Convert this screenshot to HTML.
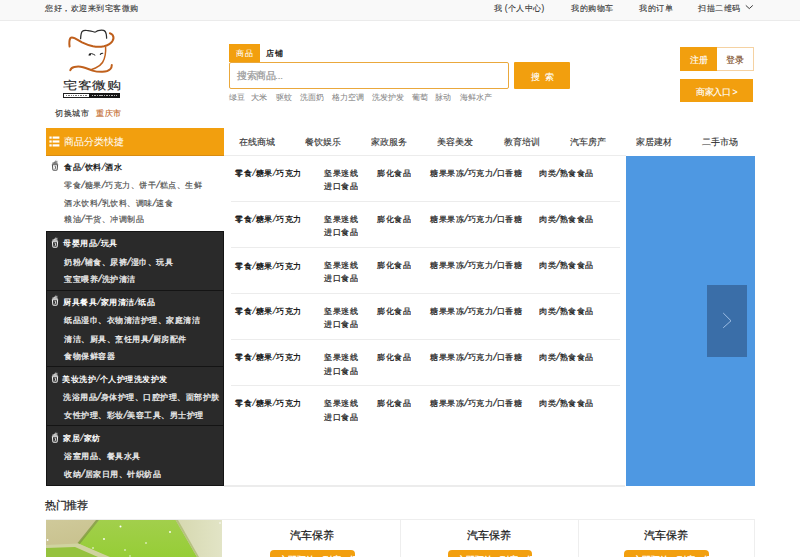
<!DOCTYPE html>
<html><head><meta charset="utf-8">
<style>
*{margin:0;padding:0;box-sizing:border-box}
html,body{width:800px;height:557px;overflow:hidden;background:#fff}
body{font-family:"Liberation Sans",sans-serif;color:#333;position:relative}
.a{position:absolute}
.t{position:absolute;white-space:nowrap;line-height:24px;transform:scale(.5);transform-origin:0 0;-webkit-text-stroke:0.45px currentColor}
.org{background:#f29f0e}
.sl{font-size:1.25em;line-height:0;margin:0 0.035em;font-weight:normal;display:inline-block;transform:skewX(-14deg)}
</style></head><body>
<div class="a" style="left:0;top:0;width:800px;height:20.5px;background:#f9f9f9;border-bottom:1px solid #ebebeb"></div>
<svg class="a" style="left:743px;top:4px" width="10" height="10" viewBox="743 4 10 10"><path d="M745.8 5.4 L749.3 8.6 L752.8 5.4" fill="none" stroke="#333" stroke-width="0.95"/></svg>
<svg class="a" style="left:60px;top:26px" width="64" height="74" viewBox="60 26 64 74">
<path d="M80.6 38.7 C80.8 35 81 32.5 82.4 31.3 C83.5 30.3 85 30.2 87 30.5 C89.5 30.9 91.5 31.2 92.6 31.5 C93.6 31.8 94.2 32.1 94.9 32.1 C95.8 32 96.8 31 98.2 30.6 C100 30.2 102 30.1 103.6 30.4 C105.3 30.9 106 32.5 106.3 34.5 C106.5 36 106.6 37.2 106.6 38.2" fill="none" stroke="#2e2e2e" stroke-width="1.25" stroke-linecap="round"/>
<path d="M69.6 46.5 C69.2 43.5 69.3 39.8 70.4 38.1 C71.2 37.1 72.6 37.2 74.5 38.2 C77 39.6 79.5 41 82 42.3 C86 44.2 90 45.6 93 46.3 C96.5 47 100.5 47 104 46.3 C107.5 45.5 110.5 43.8 112.3 41.3 C113.6 39.4 113.8 37 112.8 35.3 C112.1 34.2 111 33.5 109.9 33.2" fill="none" stroke="#bf5f1c" stroke-width="2.0" stroke-linecap="round"/>
<path d="M105.6 47.4 C105.8 50 105.6 52.5 105.2 55 C104.8 57.5 104 60.2 102.5 62.5 C100.8 65 98.5 66.8 95.5 68 C94 68.6 92.5 69.2 91 69.8" fill="none" stroke="#c0611d" stroke-width="1.5" stroke-linecap="round"/>
<path d="M70.3 70.2 C70.8 68.6 72.3 67.4 74.3 67 C77 66.4 80 66.4 83 67.2 C86.5 68.1 89.5 69.6 92.5 70.6 C95.5 71.5 99 71.9 102.5 71.8 C105.8 71.7 108.5 70.9 110.3 69.1 C111.4 68 111.8 66.5 111.8 65" fill="none" stroke="#c0611d" stroke-width="2.0" stroke-linecap="round"/>
<path d="M89 55 C89.4 53.9 90.4 53.4 91.5 53.6 C92.8 53.9 93.9 54.5 94.9 55.1" fill="none" stroke="#222" stroke-width="1.0" stroke-linecap="round"/>
<circle cx="89.9" cy="54.6" r="1.15" fill="#1a1a1a"/>
<path d="M100.3 54.4 C100.8 53.6 101.8 53.2 102.7 53.2" fill="none" stroke="#222" stroke-width="1.1" stroke-linecap="round"/>
</svg>
<div class="a" style="left:63.2px;top:93px;width:56.5px;height:5.1px;border:0.8px solid #222;background:#fff"></div><div class="a" style="left:66px;top:94.7px;width:20.5px;height:1.8px;background:repeating-linear-gradient(90deg,#555 0 1px,transparent 1px 1.7px);opacity:.8"></div>
<div class="a" style="left:89.2px;top:93px;width:30.5px;height:5.1px;background:#161616"></div><div class="a" style="left:92px;top:94.7px;width:25px;height:1.8px;background:repeating-linear-gradient(90deg,#ddd 0 1px,transparent 1px 1.7px);opacity:.8"></div>
<div class="a org" style="left:229px;top:44px;width:30.6px;height:18px"></div>
<div class="a" style="left:229px;top:61.5px;width:280px;height:27px;border:1.5px solid #eaa83c;border-radius:2px;background:#fff"></div>
<div class="a org" style="left:514px;top:61.5px;width:56px;height:27.2px;border-radius:1px"></div>
<div class="a org" style="left:680px;top:47px;width:37.1px;height:24px"></div>
<div class="a" style="left:717px;top:47px;width:37px;height:24px;border:1px solid #f5d2a2;border-left:none;background:#fff"></div>
<div class="a org" style="left:680px;top:79.2px;width:73px;height:23px"></div>
<div class="a org" style="left:45.5px;top:127.6px;width:178.5px;height:28px;border-bottom:1px solid #d88c12"></div>
<svg class="a" style="left:48px;top:135px" width="13" height="13" viewBox="48 135 13 13"><g fill="#fff"><rect x="49.4" y="136.5" width="2.3" height="2.2"/><rect x="52.6" y="136.5" width="6.8" height="2.2"/><rect x="49.4" y="140.4" width="2.3" height="2.2"/><rect x="52.6" y="140.4" width="6.8" height="2.2"/><rect x="49.4" y="144.3" width="2.3" height="2.2"/><rect x="52.6" y="144.3" width="6.8" height="2.2"/></g></svg>
<div class="a" style="left:224px;top:154.6px;width:402px;height:1.3px;background:#ececec"></div>
<div class="a" style="left:45.5px;top:231px;width:178.5px;height:255px;background:#2a2a2a;border:1px solid #141414"></div>
<div class="a" style="left:45.5px;top:289.9px;width:178.5px;height:1px;background:#141414"></div>
<div class="a" style="left:45.5px;top:366.0px;width:178.5px;height:1px;background:#141414"></div>
<div class="a" style="left:45.5px;top:424.8px;width:178.5px;height:1px;background:#141414"></div>
<svg class="a" style="left:50px;top:159.3px" width="10" height="14" viewBox="0 0 10 14"><path d="M2.4 3.6 Q5 2.6 7.6 3.6 L7.7 5.3 L2.3 5.3 Z" fill="#555" opacity="0.75"/><path d="M4.2 3.4 L6.2 1.6 M6 3.4 L7.4 1.9" stroke="#555" stroke-width="0.9"/><path d="M2.4 5.8 L7.6 5.8 L7.2 10.3 Q7 11.3 6 11.3 L4 11.3 Q3 11.3 2.8 10.3 Z" fill="none" stroke="#555" stroke-width="1.05"/><path d="M4.6 7.3 L5.6 7.3 L5.4 9.6 Q5.2 10.2 4.5 10" stroke="#555" stroke-width="0.85" fill="none"/></svg>
<svg class="a" style="left:50px;top:235.7px" width="10" height="14" viewBox="0 0 10 14"><path d="M2.4 3.6 Q5 2.6 7.6 3.6 L7.7 5.3 L2.3 5.3 Z" fill="#eee" opacity="0.75"/><path d="M4.2 3.4 L6.2 1.6 M6 3.4 L7.4 1.9" stroke="#eee" stroke-width="0.9"/><path d="M2.4 5.8 L7.6 5.8 L7.2 10.3 Q7 11.3 6 11.3 L4 11.3 Q3 11.3 2.8 10.3 Z" fill="none" stroke="#eee" stroke-width="1.05"/><path d="M4.6 7.3 L5.6 7.3 L5.4 9.6 Q5.2 10.2 4.5 10" stroke="#eee" stroke-width="0.85" fill="none"/></svg>
<svg class="a" style="left:50px;top:294.1px" width="10" height="14" viewBox="0 0 10 14"><path d="M2.4 3.6 Q5 2.6 7.6 3.6 L7.7 5.3 L2.3 5.3 Z" fill="#eee" opacity="0.75"/><path d="M4.2 3.4 L6.2 1.6 M6 3.4 L7.4 1.9" stroke="#eee" stroke-width="0.9"/><path d="M2.4 5.8 L7.6 5.8 L7.2 10.3 Q7 11.3 6 11.3 L4 11.3 Q3 11.3 2.8 10.3 Z" fill="none" stroke="#eee" stroke-width="1.05"/><path d="M4.6 7.3 L5.6 7.3 L5.4 9.6 Q5.2 10.2 4.5 10" stroke="#eee" stroke-width="0.85" fill="none"/></svg>
<svg class="a" style="left:50px;top:371.4px" width="10" height="14" viewBox="0 0 10 14"><path d="M2.4 3.6 Q5 2.6 7.6 3.6 L7.7 5.3 L2.3 5.3 Z" fill="#eee" opacity="0.75"/><path d="M4.2 3.4 L6.2 1.6 M6 3.4 L7.4 1.9" stroke="#eee" stroke-width="0.9"/><path d="M2.4 5.8 L7.6 5.8 L7.2 10.3 Q7 11.3 6 11.3 L4 11.3 Q3 11.3 2.8 10.3 Z" fill="none" stroke="#eee" stroke-width="1.05"/><path d="M4.6 7.3 L5.6 7.3 L5.4 9.6 Q5.2 10.2 4.5 10" stroke="#eee" stroke-width="0.85" fill="none"/></svg>
<svg class="a" style="left:50px;top:430.5px" width="10" height="14" viewBox="0 0 10 14"><path d="M2.4 3.6 Q5 2.6 7.6 3.6 L7.7 5.3 L2.3 5.3 Z" fill="#eee" opacity="0.75"/><path d="M4.2 3.4 L6.2 1.6 M6 3.4 L7.4 1.9" stroke="#eee" stroke-width="0.9"/><path d="M2.4 5.8 L7.6 5.8 L7.2 10.3 Q7 11.3 6 11.3 L4 11.3 Q3 11.3 2.8 10.3 Z" fill="none" stroke="#eee" stroke-width="1.05"/><path d="M4.6 7.3 L5.6 7.3 L5.4 9.6 Q5.2 10.2 4.5 10" stroke="#eee" stroke-width="0.85" fill="none"/></svg>
<div class="a" style="left:230.5px;top:200.55px;width:389.5px;height:1.4px;background:#ececec"></div>
<div class="a" style="left:230.5px;top:246.65px;width:389.5px;height:1.4px;background:#ececec"></div>
<div class="a" style="left:230.5px;top:292.75px;width:389.5px;height:1.4px;background:#ececec"></div>
<div class="a" style="left:230.5px;top:338.85px;width:389.5px;height:1.4px;background:#ececec"></div>
<div class="a" style="left:230.5px;top:384.95px;width:389.5px;height:1.4px;background:#ececec"></div>
<div class="a" style="left:626px;top:155.6px;width:128.5px;height:330.3px;background:#4e98e2"></div>
<div class="a" style="left:707px;top:285.4px;width:40.4px;height:71.6px;background:#3a6ea8"></div>
<svg class="a" style="left:718px;top:308px" width="18" height="24" viewBox="718 308 18 24"><path d="M723.2 313 L731 320.8 L723.2 327.8" fill="none" stroke="#a9c6ea" stroke-width="0.9"/></svg>
<div class="a" style="left:224px;top:485.2px;width:400.5px;height:1.6px;background:#ececec"></div>
<div class="a" style="left:45.5px;top:519px;width:709px;height:1px;background:#eee"></div>
<div class="a" style="left:400px;top:519px;width:1px;height:38px;background:#eee"></div>
<div class="a" style="left:577.5px;top:519px;width:1px;height:38px;background:#eee"></div>
<div class="a" style="left:753.5px;top:519px;width:1px;height:38px;background:#eee"></div>
<div class="a org" style="left:270px;top:550.2px;width:85.0px;height:16px;border-radius:4px"></div>
<div class="a org" style="left:447.5px;top:550.2px;width:84.5px;height:16px;border-radius:4px"></div>
<div class="a org" style="left:624px;top:550.2px;width:84.6px;height:16px;border-radius:4px"></div>
<svg class="a" style="left:46px;top:520px" width="176" height="37" viewBox="46 520 176 37">
<defs>
<linearGradient id="kh" x1="0" y1="0" x2="1" y2="1"><stop offset="0" stop-color="#cfc99a"/><stop offset="0.6" stop-color="#c6bf8a"/><stop offset="1" stop-color="#d3cfa6"/></linearGradient>
<linearGradient id="rt" x1="0" y1="0" x2="1" y2="0"><stop offset="0" stop-color="#cfd1a2"/><stop offset="1" stop-color="#e2e4c6"/></linearGradient>
<linearGradient id="gg" x1="0" y1="0" x2="0" y2="1"><stop offset="0" stop-color="#a2cf4c"/><stop offset="1" stop-color="#96cd36"/></linearGradient>
</defs>
<rect x="46" y="520" width="176" height="37" fill="url(#kh)"/>
<rect x="150" y="520" width="72" height="37" fill="url(#rt)"/>
<path d="M99 520 L175.6 520 L197 557 L108 557 L78.3 543.6 Z" fill="url(#gg)"/>
<path d="M99 520 L96 520 L77.5 543 L79.5 544.5 Z" fill="#7f9c3e" opacity="0.8"/>
<path d="M175.6 520 L178 520 L199 557 L197 557 Z" fill="#b3bf7a" opacity="0.9"/>
<path d="M46 545 L78.3 543.6 L110 557 L46 557 Z" fill="#d0d3a0"/>
<path d="M46 548 L75 547 L98 557 L46 557 Z" fill="#95c23e"/>
<g fill="#fff"><circle cx="120.5" cy="526.4" r="1"/><circle cx="104" cy="539" r="0.9"/><circle cx="93" cy="548" r="0.8"/><circle cx="170" cy="532" r="0.9"/><circle cx="146" cy="543" r="0.8"/><circle cx="125" cy="550" r="0.8"/><circle cx="47.6" cy="540" r="0.9"/><circle cx="130" cy="556" r="0.7"/><circle cx="220" cy="523" r="0.8"/></g>
</svg>
<div class="a btntxt" style="left:279.0px;top:553.6px;width:67.0px;text-align:center;font-size:9px;line-height:12px;color:#fff;white-space:nowrap;-webkit-text-stroke:0.3px #fff">立即预约 · 到店 · 领取</div>
<div class="a btntxt" style="left:456.5px;top:553.6px;width:66.5px;text-align:center;font-size:9px;line-height:12px;color:#fff;white-space:nowrap;-webkit-text-stroke:0.3px #fff">立即预约 · 到店 · 领取</div>
<div class="a btntxt" style="left:633.0px;top:553.6px;width:66.6px;text-align:center;font-size:9px;line-height:12px;color:#fff;white-space:nowrap;-webkit-text-stroke:0.3px #fff">立即预约 · 到店 · 领取</div>
<div class="t" id="g1" style="left:45.31px;top:1.75px;font-size:16.50px;font-weight:normal;-webkit-text-stroke:0.2px currentColor;color:#333;">您好，欢迎来到宅客微购</div>
<div class="t" id="g2" style="left:493.80px;top:1.75px;font-size:16.50px;font-weight:normal;-webkit-text-stroke:0.2px currentColor;color:#333;">我 (个人中心)</div>
<div class="t" id="g3" style="left:570.90px;top:1.75px;font-size:16.50px;font-weight:normal;-webkit-text-stroke:0.2px currentColor;color:#333;">我的购物车</div>
<div class="t" id="g4" style="left:638.70px;top:1.75px;font-size:16.50px;font-weight:normal;-webkit-text-stroke:0.2px currentColor;color:#333;">我的订单</div>
<div class="t" id="g5" style="left:698.40px;top:1.75px;font-size:16.50px;font-weight:normal;-webkit-text-stroke:0.2px currentColor;color:#333;">扫描二维码</div>
<div class="t" id="lg" style="left:63.40px;top:80.10px;font-size:28.60px;font-weight:normal;color:#1e1e1e;transform:scale(.5,0.39);-webkit-text-stroke:0.3px currentColor;">宅客微购</div>
<div class="t" id="c1" style="left:54.76px;top:106.50px;font-size:16.80px;font-weight:normal;-webkit-text-stroke:0.3px currentColor;color:#333;">切换城市</div>
<div class="t" id="c2" style="left:95.70px;top:106.50px;font-size:16.80px;font-weight:normal;-webkit-text-stroke:0.3px currentColor;color:#c46a2c;">重庆市</div>
<div class="t" id="s1" style="left:235.50px;top:46.60px;font-size:16.60px;font-weight:normal;-webkit-text-stroke:0.1px currentColor;color:#fff;">商品</div>
<div class="t" id="s2" style="left:266.20px;top:46.60px;font-size:16.60px;font-weight:bold;-webkit-text-stroke:0px currentColor;color:#222;">店铺</div>
<div class="t" id="ph" style="left:236.80px;top:70.30px;font-size:19.00px;font-weight:normal;color:#999;">搜索商品...</div>
<div class="t" id="sb" style="left:531.03px;top:71.00px;font-size:17.20px;font-weight:normal;-webkit-text-stroke:0.25px currentColor;color:#fff;letter-spacing:2.8px;">搜 索</div>
<div class="t" id="h0" style="left:229.10px;top:90.90px;font-size:16.30px;font-weight:normal;-webkit-text-stroke:0.1px currentColor;color:#858585;">绿豆</div>
<div class="t" id="h1" style="left:250.80px;top:90.90px;font-size:16.30px;font-weight:normal;-webkit-text-stroke:0.1px currentColor;color:#858585;">大米</div>
<div class="t" id="h2" style="left:276.30px;top:90.90px;font-size:16.30px;font-weight:normal;-webkit-text-stroke:0.1px currentColor;color:#858585;">驱蚊</div>
<div class="t" id="h3" style="left:300.00px;top:90.90px;font-size:16.30px;font-weight:normal;-webkit-text-stroke:0.1px currentColor;color:#858585;">洗面奶</div>
<div class="t" id="h4" style="left:332.00px;top:90.90px;font-size:16.30px;font-weight:normal;-webkit-text-stroke:0.1px currentColor;color:#858585;">格力空调</div>
<div class="t" id="h5" style="left:371.50px;top:90.90px;font-size:16.30px;font-weight:normal;-webkit-text-stroke:0.1px currentColor;color:#858585;">洗发护发</div>
<div class="t" id="h6" style="left:412.00px;top:90.90px;font-size:16.30px;font-weight:normal;-webkit-text-stroke:0.1px currentColor;color:#858585;">葡萄</div>
<div class="t" id="h7" style="left:435.25px;top:90.90px;font-size:16.30px;font-weight:normal;-webkit-text-stroke:0.1px currentColor;color:#858585;">脉动</div>
<div class="t" id="h8" style="left:459.50px;top:90.90px;font-size:16.30px;font-weight:normal;-webkit-text-stroke:0.1px currentColor;color:#858585;">海鲜水产</div>
<div class="t" id="r1" style="left:689.50px;top:53.80px;font-size:17.40px;font-weight:normal;-webkit-text-stroke:0.25px currentColor;color:#fff;">注册</div>
<div class="t" id="r2" style="left:726.00px;top:53.80px;font-size:17.40px;font-weight:normal;-webkit-text-stroke:0.25px currentColor;color:#7b4a1e;">登录</div>
<div class="t" id="r3" style="left:696.00px;top:86.20px;font-size:17.40px;font-weight:normal;-webkit-text-stroke:0.25px currentColor;color:#fff;">商家入口 &gt;</div>
<div class="t" id="ch" style="left:64.00px;top:135.00px;font-size:19.70px;font-weight:normal;-webkit-text-stroke:0.1px currentColor;color:#fff;">商品分类快捷</div>
<div class="t" id="n0" style="left:238.70px;top:136.25px;font-size:18.20px;font-weight:normal;-webkit-text-stroke:0.25px currentColor;color:#333;">在线商城</div>
<div class="t" id="n1" style="left:305.18px;top:136.25px;font-size:18.20px;font-weight:normal;-webkit-text-stroke:0.25px currentColor;color:#333;">餐饮娱乐</div>
<div class="t" id="n2" style="left:371.16px;top:136.25px;font-size:18.20px;font-weight:normal;-webkit-text-stroke:0.25px currentColor;color:#333;">家政服务</div>
<div class="t" id="n3" style="left:436.64px;top:136.25px;font-size:18.20px;font-weight:normal;-webkit-text-stroke:0.25px currentColor;color:#333;">美容美发</div>
<div class="t" id="n4" style="left:503.62px;top:136.25px;font-size:18.20px;font-weight:normal;-webkit-text-stroke:0.25px currentColor;color:#333;">教育培训</div>
<div class="t" id="n5" style="left:570.10px;top:136.25px;font-size:18.20px;font-weight:normal;-webkit-text-stroke:0.25px currentColor;color:#333;">汽车房产</div>
<div class="t" id="n6" style="left:635.58px;top:136.25px;font-size:18.20px;font-weight:normal;-webkit-text-stroke:0.25px currentColor;color:#333;">家居建材</div>
<div class="t" id="n7" style="left:702.06px;top:136.25px;font-size:18.20px;font-weight:normal;-webkit-text-stroke:0.25px currentColor;color:#333;">二手市场</div>
<div class="t" id="ct0" style="left:63.70px;top:161.20px;font-size:16.70px;font-weight:bold;-webkit-text-stroke:0px currentColor;color:#222;">食品<span class="sl">/</span>饮料<span class="sl">/</span>酒水</div>
<div class="t" id="cs0_0" style="left:64.20px;top:179.00px;font-size:16.60px;font-weight:normal;-webkit-text-stroke:0.3px currentColor;color:#4a4a4a;">零食<span class="sl">/</span>糖果<span class="sl">/</span>巧克力、饼干<span class="sl">/</span>糕点、生鲜</div>
<div class="t" id="cs0_1" style="left:63.50px;top:197.20px;font-size:16.60px;font-weight:normal;-webkit-text-stroke:0.3px currentColor;color:#4a4a4a;">酒水饮料<span class="sl">/</span>乳饮料、调味<span class="sl">/</span>速食</div>
<div class="t" id="cs0_2" style="left:63.50px;top:212.80px;font-size:16.60px;font-weight:normal;-webkit-text-stroke:0.3px currentColor;color:#4a4a4a;">粮油<span class="sl">/</span>干货、冲调制品</div>
<div class="t" id="ct1" style="left:62.69px;top:237.19px;font-size:16.70px;font-weight:bold;-webkit-text-stroke:0px currentColor;color:#fff;">母婴用品<span class="sl">/</span>玩具</div>
<div class="t" id="cs1_0" style="left:63.50px;top:255.50px;font-size:16.60px;font-weight:normal;-webkit-text-stroke:0.6px currentColor;color:#ececec;">奶粉<span class="sl">/</span>辅食、尿裤<span class="sl">/</span>湿巾、玩具</div>
<div class="t" id="cs1_1" style="left:63.50px;top:272.90px;font-size:16.60px;font-weight:normal;-webkit-text-stroke:0.6px currentColor;color:#ececec;">宝宝喂养<span class="sl">/</span>洗护清洁</div>
<div class="t" id="ct2" style="left:63.20px;top:295.90px;font-size:16.70px;font-weight:bold;-webkit-text-stroke:0px currentColor;color:#fff;">厨具餐具<span class="sl">/</span>家用清洁<span class="sl">/</span>纸品</div>
<div class="t" id="cs2_0" style="left:63.50px;top:313.50px;font-size:16.60px;font-weight:normal;-webkit-text-stroke:0.6px currentColor;color:#ececec;">纸品湿巾、衣物清洁护理、家庭清洁</div>
<div class="t" id="cs2_1" style="left:63.50px;top:332.50px;font-size:16.60px;font-weight:normal;-webkit-text-stroke:0.6px currentColor;color:#ececec;">清洁、厨具、烹饪用具<span class="sl">/</span>厨房配件</div>
<div class="t" id="cs2_2" style="left:63.50px;top:349.70px;font-size:16.60px;font-weight:normal;-webkit-text-stroke:0.6px currentColor;color:#ececec;">食物保鲜容器</div>
<div class="t" id="ct3" style="left:61.70px;top:372.70px;font-size:16.70px;font-weight:bold;-webkit-text-stroke:0px currentColor;color:#fff;">美妆洗护<span class="sl">/</span>个人护理洗发护发</div>
<div class="t" id="cs3_0" style="left:62.50px;top:391.30px;font-size:16.60px;font-weight:normal;-webkit-text-stroke:0.6px currentColor;color:#ececec;">洗浴用品<span class="sl">/</span>身体护理、口腔护理、面部护肤</div>
<div class="t" id="cs3_1" style="left:63.50px;top:409.00px;font-size:16.60px;font-weight:normal;-webkit-text-stroke:0.6px currentColor;color:#ececec;">女性护理、彩妆<span class="sl">/</span>美容工具、男士护理</div>
<div class="t" id="ct4" style="left:62.90px;top:431.70px;font-size:16.70px;font-weight:bold;-webkit-text-stroke:0px currentColor;color:#fff;">家居<span class="sl">/</span>家纺</div>
<div class="t" id="cs4_0" style="left:63.50px;top:449.50px;font-size:16.60px;font-weight:normal;-webkit-text-stroke:0.6px currentColor;color:#ececec;">浴室用品、餐具水具</div>
<div class="t" id="cs4_1" style="left:63.50px;top:467.80px;font-size:16.60px;font-weight:normal;-webkit-text-stroke:0.6px currentColor;color:#ececec;">收纳<span class="sl">/</span>居家日用、针织纺品</div>
<div class="t" id="rb0" style="left:234.75px;top:166.75px;font-size:16.80px;font-weight:bold;-webkit-text-stroke:0px currentColor;color:#1a1a1a;">零食<span class="sl">/</span>糖果<span class="sl">/</span>巧克力</div>
<div class="t" id="ra0" style="left:324.00px;top:166.50px;font-size:16.60px;font-weight:normal;color:#1e1e1e;">坚果迷线</div>
<div class="t" id="rc0" style="left:376.50px;top:166.50px;font-size:16.60px;font-weight:normal;color:#1e1e1e;">膨化食品</div>
<div class="t" id="rd0" style="left:430.40px;top:166.50px;font-size:16.60px;font-weight:normal;color:#1e1e1e;">糖果果冻<span class="sl">/</span>巧克力<span class="sl">/</span>口香糖</div>
<div class="t" id="re0" style="left:539.30px;top:166.50px;font-size:16.60px;font-weight:normal;color:#1e1e1e;">肉类<span class="sl">/</span>熟食食品</div>
<div class="t" id="rf0" style="left:324.00px;top:180.00px;font-size:16.60px;font-weight:normal;color:#1e1e1e;">进口食品</div>
<div class="t" id="rb1" style="left:234.75px;top:212.65px;font-size:16.80px;font-weight:bold;-webkit-text-stroke:0px currentColor;color:#1a1a1a;">零食<span class="sl">/</span>糖果<span class="sl">/</span>巧克力</div>
<div class="t" id="ra1" style="left:324.00px;top:212.90px;font-size:16.60px;font-weight:normal;color:#1e1e1e;">坚果迷线</div>
<div class="t" id="rc1" style="left:376.50px;top:212.90px;font-size:16.60px;font-weight:normal;color:#1e1e1e;">膨化食品</div>
<div class="t" id="rd1" style="left:430.40px;top:212.90px;font-size:16.60px;font-weight:normal;color:#1e1e1e;">糖果果冻<span class="sl">/</span>巧克力<span class="sl">/</span>口香糖</div>
<div class="t" id="re1" style="left:539.30px;top:212.90px;font-size:16.60px;font-weight:normal;color:#1e1e1e;">肉类<span class="sl">/</span>熟食食品</div>
<div class="t" id="rf1" style="left:324.00px;top:225.90px;font-size:16.60px;font-weight:normal;color:#1e1e1e;">进口食品</div>
<div class="t" id="rb2" style="left:234.75px;top:259.55px;font-size:16.80px;font-weight:bold;-webkit-text-stroke:0px currentColor;color:#1a1a1a;">零食<span class="sl">/</span>糖果<span class="sl">/</span>巧克力</div>
<div class="t" id="ra2" style="left:324.00px;top:258.80px;font-size:16.60px;font-weight:normal;color:#1e1e1e;">坚果迷线</div>
<div class="t" id="rc2" style="left:376.50px;top:258.80px;font-size:16.60px;font-weight:normal;color:#1e1e1e;">膨化食品</div>
<div class="t" id="rd2" style="left:430.40px;top:258.80px;font-size:16.60px;font-weight:normal;color:#1e1e1e;">糖果果冻<span class="sl">/</span>巧克力<span class="sl">/</span>口香糖</div>
<div class="t" id="re2" style="left:539.30px;top:258.80px;font-size:16.60px;font-weight:normal;color:#1e1e1e;">肉类<span class="sl">/</span>熟食食品</div>
<div class="t" id="rf2" style="left:324.00px;top:271.80px;font-size:16.60px;font-weight:normal;color:#1e1e1e;">进口食品</div>
<div class="t" id="rb3" style="left:234.75px;top:305.45px;font-size:16.80px;font-weight:bold;-webkit-text-stroke:0px currentColor;color:#1a1a1a;">零食<span class="sl">/</span>糖果<span class="sl">/</span>巧克力</div>
<div class="t" id="ra3" style="left:324.00px;top:305.20px;font-size:16.60px;font-weight:normal;color:#1e1e1e;">坚果迷线</div>
<div class="t" id="rc3" style="left:376.50px;top:305.20px;font-size:16.60px;font-weight:normal;color:#1e1e1e;">膨化食品</div>
<div class="t" id="rd3" style="left:430.40px;top:305.20px;font-size:16.60px;font-weight:normal;color:#1e1e1e;">糖果果冻<span class="sl">/</span>巧克力<span class="sl">/</span>口香糖</div>
<div class="t" id="re3" style="left:539.30px;top:305.20px;font-size:16.60px;font-weight:normal;color:#1e1e1e;">肉类<span class="sl">/</span>熟食食品</div>
<div class="t" id="rf3" style="left:324.00px;top:317.70px;font-size:16.60px;font-weight:normal;color:#1e1e1e;">进口食品</div>
<div class="t" id="rb4" style="left:234.75px;top:351.35px;font-size:16.80px;font-weight:bold;-webkit-text-stroke:0px currentColor;color:#1a1a1a;">零食<span class="sl">/</span>糖果<span class="sl">/</span>巧克力</div>
<div class="t" id="ra4" style="left:324.00px;top:351.10px;font-size:16.60px;font-weight:normal;color:#1e1e1e;">坚果迷线</div>
<div class="t" id="rc4" style="left:376.50px;top:351.10px;font-size:16.60px;font-weight:normal;color:#1e1e1e;">膨化食品</div>
<div class="t" id="rd4" style="left:430.40px;top:351.10px;font-size:16.60px;font-weight:normal;color:#1e1e1e;">糖果果冻<span class="sl">/</span>巧克力<span class="sl">/</span>口香糖</div>
<div class="t" id="re4" style="left:539.30px;top:351.10px;font-size:16.60px;font-weight:normal;color:#1e1e1e;">肉类<span class="sl">/</span>熟食食品</div>
<div class="t" id="rf4" style="left:324.00px;top:364.60px;font-size:16.60px;font-weight:normal;color:#1e1e1e;">进口食品</div>
<div class="t" id="rb5" style="left:234.75px;top:397.25px;font-size:16.80px;font-weight:bold;-webkit-text-stroke:0px currentColor;color:#1a1a1a;">零食<span class="sl">/</span>糖果<span class="sl">/</span>巧克力</div>
<div class="t" id="ra5" style="left:324.00px;top:396.50px;font-size:16.60px;font-weight:normal;color:#1e1e1e;">坚果迷线</div>
<div class="t" id="rc5" style="left:376.50px;top:396.50px;font-size:16.60px;font-weight:normal;color:#1e1e1e;">膨化食品</div>
<div class="t" id="rd5" style="left:430.40px;top:396.50px;font-size:16.60px;font-weight:normal;color:#1e1e1e;">糖果果冻<span class="sl">/</span>巧克力<span class="sl">/</span>口香糖</div>
<div class="t" id="re5" style="left:539.30px;top:396.50px;font-size:16.60px;font-weight:normal;color:#1e1e1e;">肉类<span class="sl">/</span>熟食食品</div>
<div class="t" id="rf5" style="left:324.00px;top:410.50px;font-size:16.60px;font-weight:normal;color:#1e1e1e;">进口食品</div>
<div class="t" id="hr" style="left:45.00px;top:498.50px;font-size:21.20px;font-weight:normal;color:#222;">热门推荐</div>
<div class="t" id="cd0" style="left:290.00px;top:528.50px;font-size:21.80px;font-weight:normal;color:#222;">汽车保养</div>
<div class="t" id="cd1" style="left:466.50px;top:528.50px;font-size:21.80px;font-weight:normal;color:#222;">汽车保养</div>
<div class="t" id="cd2" style="left:643.92px;top:528.50px;font-size:21.80px;font-weight:normal;color:#222;">汽车保养</div>
</body></html>
